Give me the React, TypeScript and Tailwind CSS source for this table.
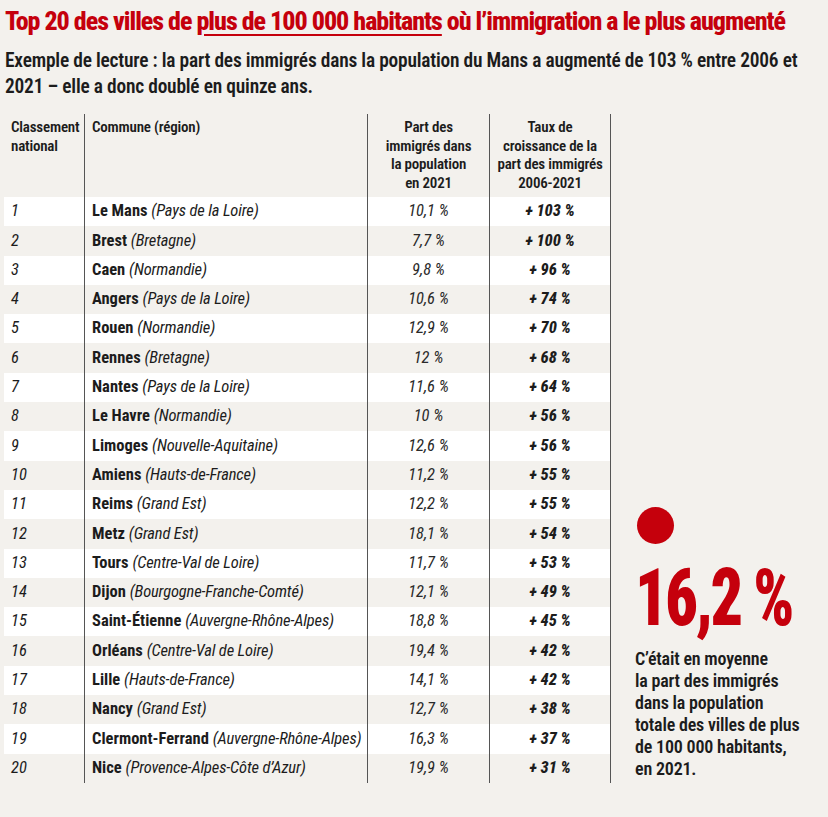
const rows: [string, string, string, string][] = [
  ["Le Mans", "Pays de la Loire", "10,1 %", "+ 103 %"],
  ["Brest", "Bretagne", "7,7 %", "+ 100 %"],
  ["Caen", "Normandie", "9,8 %", "+ 96 %"],
  ["Angers", "Pays de la Loire", "10,6 %", "+ 74 %"],
  ["Rouen", "Normandie", "12,9 %", "+ 70 %"],
  ["Rennes", "Bretagne", "12 %", "+ 68 %"],
  ["Nantes", "Pays de la Loire", "11,6 %", "+ 64 %"],
  ["Le Havre", "Normandie", "10 %", "+ 56 %"],
  ["Limoges", "Nouvelle-Aquitaine", "12,6 %", "+ 56 %"],
  ["Amiens", "Hauts-de-France", "11,2 %", "+ 55 %"],
  ["Reims", "Grand Est", "12,2 %", "+ 55 %"],
  ["Metz", "Grand Est", "18,1 %", "+ 54 %"],
  ["Tours", "Centre-Val de Loire", "11,7 %", "+ 53 %"],
  ["Dijon", "Bourgogne-Franche-Comté", "12,1 %", "+ 49 %"],
  ["Saint-Étienne", "Auvergne-Rhône-Alpes", "18,8 %", "+ 45 %"],
  ["Orléans", "Centre-Val de Loire", "19,4 %", "+ 42 %"],
  ["Lille", "Hauts-de-France", "14,1 %", "+ 42 %"],
  ["Nancy", "Grand Est", "12,7 %", "+ 38 %"],
  ["Clermont-Ferrand", "Auvergne-Rhône-Alpes", "16,3 %", "+ 37 %"],
  ["Nice", "Provence-Alpes-Côte d’Azur", "19,9 %", "+ 31 %"],
]

export default function App() {
  return (
    <div className="w-[828px] h-[817px] bg-[#f3f1ed] text-[#1c1c1c] overflow-hidden font-['Roboto_Condensed',Roboto,sans-serif]">
      <div className="pl-[5px] pt-[5px]">
        <h1 className="text-[26px] leading-[32px] font-extrabold text-[#c5000c] tracking-[-1px] whitespace-nowrap">
          Top 20 des villes de <span className="underline decoration-[1.5px] underline-offset-[4px]">plus de 100 000 habitants</span> où l’immigration a le plus augmenté
        </h1>
        <p className="mt-[11px] text-[19.4px] leading-[26px] font-semibold tracking-[-0.2px] pr-[20px]">
          Exemple de lecture : la part des immigrés dans la population du Mans a augmenté de 103 % entre 2006 et 2021 – elle a donc doublé en quinze ans.
        </p>
      </div>

      <div className="flex mt-[14px]">
        <div className="ml-[4px] w-[607px]">
          <div className="grid grid-cols-[80px_283px_122px_122px] text-[15px] leading-[18.5px] font-semibold tracking-[-0.2px]">
            <div className="pl-[7px] pt-[4px] h-[83px]">Classement<br />national</div>
            <div className="pl-[7px] pt-[4px] border-l border-[#555]">Commune (région)</div>
            <div className="pt-[4px] text-center border-l border-[#555]">Part des<br />immigrés dans<br />la population<br />en 2021</div>
            <div className="pt-[4px] text-center border-x border-[#555]">Taux de<br />croissance de la<br />part des immigrés<br />2006-2021</div>
          </div>
          {rows.map(([city, region, part, taux], i) => (
            <div
              key={city}
              className={`grid grid-cols-[80px_283px_122px_122px] h-[29.3px] items-center text-[16.5px] ${i % 2 === 0 ? "bg-white" : ""}`}
            >
              <div className="pl-[7px] italic">{i + 1}</div>
              <div className="pl-[7px] h-full flex items-center border-l border-[#555] whitespace-nowrap">
                <span className="font-bold">{city}</span>&nbsp;<span className="italic tracking-[-0.15px]">({region})</span>
              </div>
              <div className="h-full flex items-center justify-center border-l border-[#555] italic text-[#2a2a2a]">{part}</div>
              <div className="h-full flex items-center justify-center border-x border-[#555] italic font-extrabold">{taux}</div>
            </div>
          ))}
        </div>

        <div className="pl-[24px] flex flex-col justify-end pb-[3px]">
          <div className="ml-[2px] w-[37px] h-[37px] rounded-full bg-[#c5000c]" />
          <div className="mt-[22px] text-[80px] leading-[64px] font-black text-[#c5000c] tracking-[-3px] whitespace-nowrap scale-x-[0.8] origin-left">16,2 %</div>
          <p className="mt-[18px] text-[18px] leading-[22px] font-semibold tracking-[-0.2px]">
            C’était en moyenne<br />la part des immigrés<br />dans la population<br />totale des villes de plus<br />de 100 000 habitants,<br />en 2021.
          </p>
        </div>
      </div>
    </div>
  )
}
